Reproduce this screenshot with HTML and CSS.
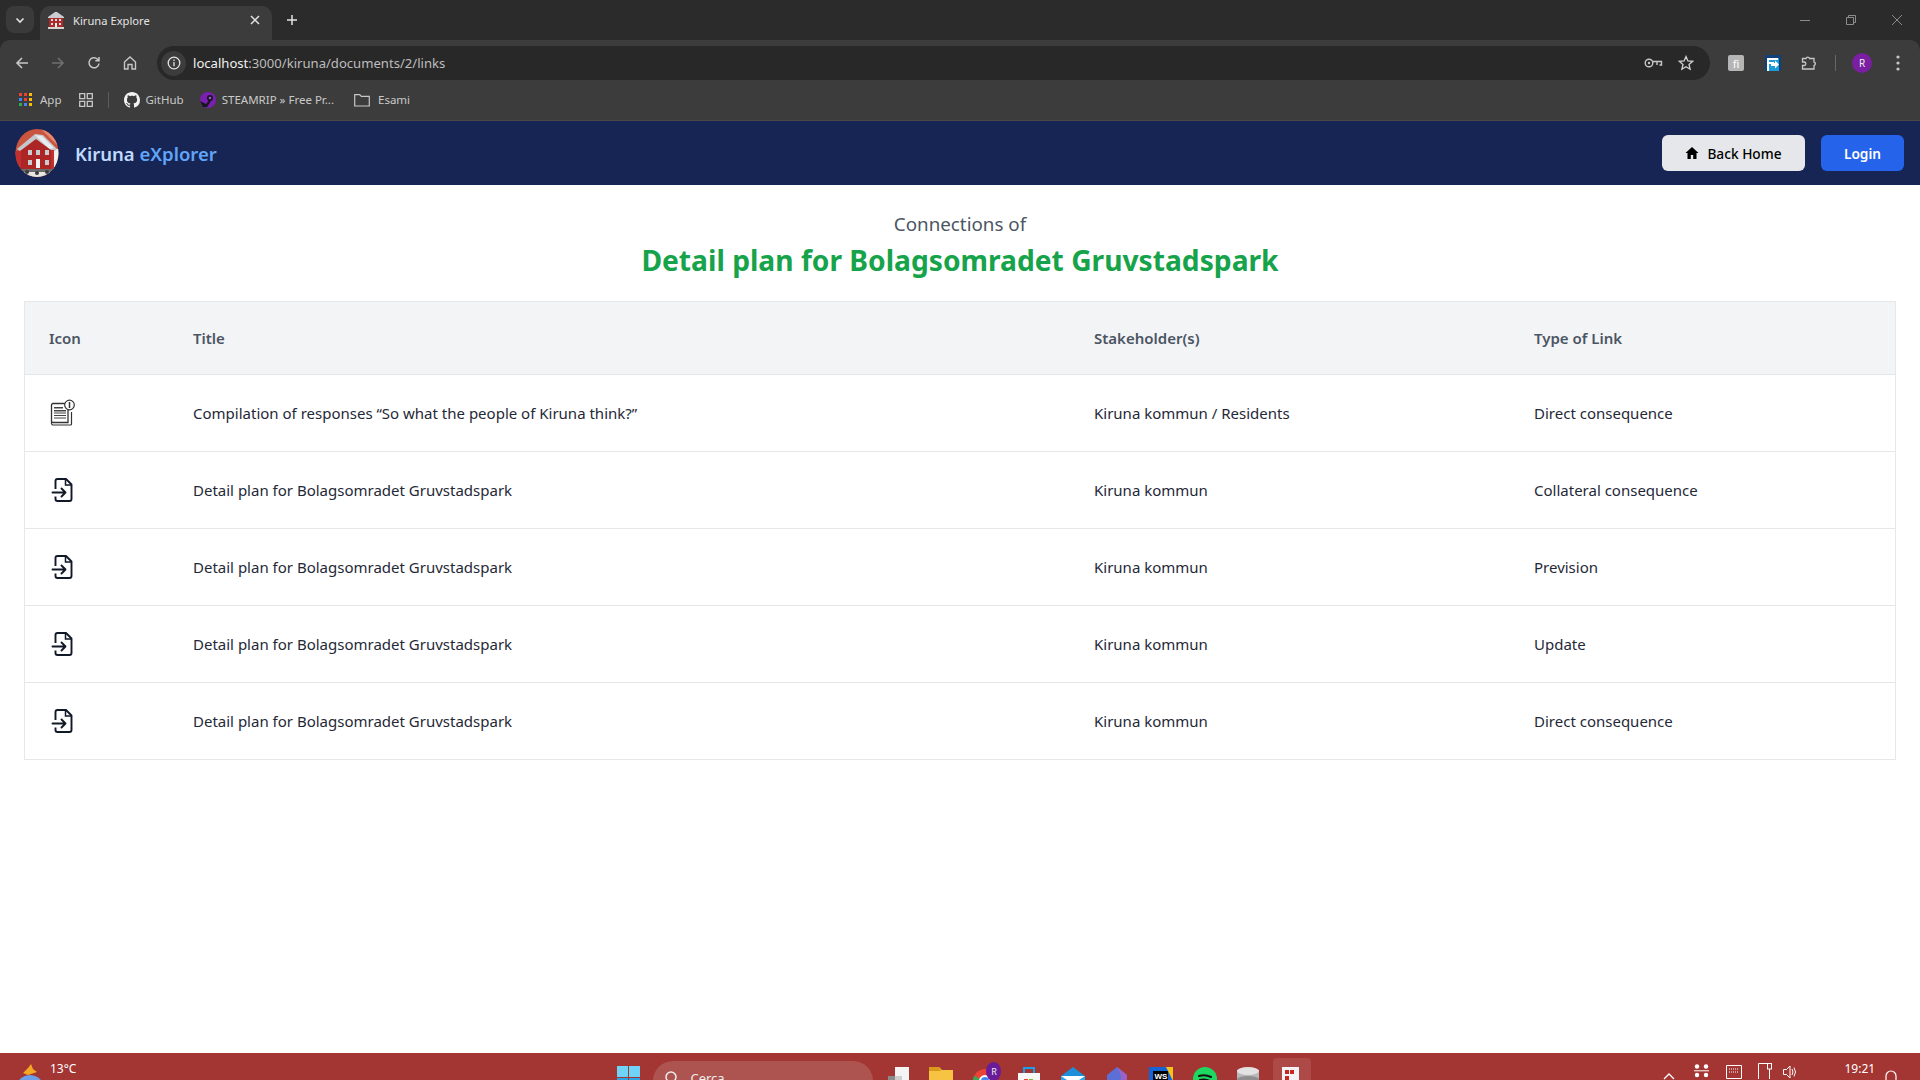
FILE: index.html
```html
<!DOCTYPE html>
<html lang="en">
<head>
<meta charset="utf-8">
<title>Kiruna Explore</title>
<link rel="stylesheet" href="styles.css">
</head>
<body>
<svg class="defs" width="0" height="0" aria-hidden="true">
  <symbol id="house" viewBox="0 0 44 48">
    <clipPath id="hc"><ellipse cx="22" cy="24" rx="21.500" ry="24"/></clipPath>
    <g clip-path="url(#hc)">
      <rect width="44" height="48" fill="#c9553f"/>
      <path d="M26 0h18v18z" fill="#e8876f"/>
      <path d="M0 0h14L0 14z" fill="#a9432f"/>
      <path d="M36 20h8v20h-8z" fill="#f5f0ec"/>
      <path d="M2 20 20 5l8 1 14 14-2 2H5z" fill="#c4c8cc"/>
      <path d="M20 6l7 1 12 12-5 1z" fill="#e9ecee"/>
      <path d="M5 22 21 10l15 11v19H5z" fill="#ad2626"/>
      <path d="M0 22h6v16H0zM36 21h3v19h-3z" fill="#c22f2f"/>
      <g fill="#c9ccd0">
        <rect x="13" y="21" width="4" height="5"/><rect x="21" y="21" width="4" height="5"/><rect x="30" y="21" width="4" height="5"/>
        <rect x="13" y="31" width="4" height="5"/><rect x="30" y="31" width="4" height="5"/>
      </g>
      <rect x="21" y="30" width="4" height="9" fill="#f2f2f2"/>
      <path d="M3 40h38v3H3z" fill="#6b6b6b"/>
      <path d="M0 43h44v5H0z" fill="#e9e6e2"/>
      <g fill="#3a3a3a"><circle cx="12" cy="43" r="2"/><circle cx="22" cy="44" r="2"/><circle cx="32" cy="43" r="2"/></g>
    </g>
  </symbol>
  <symbol id="fav" viewBox="0 0 16 17">
    <path d="M0 5 7 0h2l7 5v1H0z" fill="#c9ccd0"/>
    <path d="M1 6h14v9H1z" fill="#ad2a2a"/>
    <path d="M3 7h2v2H3zM7 7h2v2H7zM11 7h2v2h-2zM3 11h2v2H3zM11 11h2v2h-2z" fill="#d9dbdd"/>
    <path d="M7 11h2v4H7z" fill="#f2f2f2"/>
    <path d="M0 15h16v2H0z" fill="#d8d4d0"/>
  </symbol>
  <symbol id="file-in" viewBox="0 0 26 26">
    <path d="M6.500 12V4a2 2 0 0 1 2-2h8.500l5.500 5.500V22a2 2 0 0 1-2 2h-12a2 2 0 0 1-2-2v-2.500" fill="none" stroke="#111827" stroke-width="1.900" stroke-linejoin="round"/>
    <path d="M16.500 2.500v5.500h5.500" fill="none" stroke="#111827" stroke-width="1.500"/>
    <path d="M3.500 15.500H16.500M12.500 11.500l4 4-4 4" fill="none" stroke="#111827" stroke-width="1.900" stroke-linecap="round" stroke-linejoin="round"/>
  </symbol>
</svg>

<div class="browser">
  <div class="tabstrip">
    <span class="tab-menu">
      <svg width="12" height="12" viewBox="0 0 12 12"><path d="M2.500 4.500 6 8l3.500-3.500" fill="none" stroke="#e3e3e3" stroke-width="1.600"/></svg>
    </span>
    <div class="tab">
      <svg class="tab-fav" width="16" height="17"><use href="#fav"/></svg>
      <span class="tab-title">Kiruna Explore</span>
      <svg class="tab-close" width="10" height="10" viewBox="0 0 10 10"><path d="M1 1l8 8M9 1 1 9" stroke="#e3e3e3" stroke-width="1.500"/></svg>
    </div>
    <svg class="tab-new" width="12" height="12" viewBox="0 0 12 12"><path d="M6 1v10M1 6h10" stroke="#e3e3e3" stroke-width="1.500"/></svg>
    <div class="win-controls">
      <svg width="12" height="12" viewBox="0 0 12 12"><path d="M1 6.500h10" stroke="#8c8c8c"/></svg>
      <svg width="12" height="12" viewBox="0 0 12 12"><path d="M1.500 3.500h7v7h-7zM3.500 3V1.500h7v7H9" fill="none" stroke="#8c8c8c"/></svg>
      <svg width="12" height="12" viewBox="0 0 12 12"><path d="M1 1l10 10M11 1 1 11" stroke="#8c8c8c"/></svg>
    </div>
  </div>

  <div class="toolbar">
    <svg class="nav nav-back" width="16" height="16" viewBox="0 0 16 16"><path d="M14 8H3M8 3 3 8l5 5" fill="none" stroke="#c7c7c7" stroke-width="1.600"/></svg>
    <svg class="nav nav-fwd" width="16" height="16" viewBox="0 0 16 16"><path d="M2 8h11M8 3l5 5-5 5" fill="none" stroke="#6f6f6f" stroke-width="1.600"/></svg>
    <svg class="nav nav-reload" width="16" height="16" viewBox="0 0 16 16"><path d="M13 8.500A5 5 0 1 1 11.500 4.200L13 5.500M13 2v3.700H9.300" fill="none" stroke="#c7c7c7" stroke-width="1.500"/></svg>
    <svg class="nav nav-home" width="16" height="16" viewBox="0 0 16 16"><path d="M2.500 7 8 2l5.500 5v7h-3.500V9.500H6V14H2.500z" fill="none" stroke="#c7c7c7" stroke-width="1.400"/></svg>
    <div class="omnibox">
      <span class="site-info">
        <svg width="14" height="14" viewBox="0 0 14 14"><circle cx="7" cy="7" r="5.800" fill="none" stroke="#e3e3e3" stroke-width="1.300"/><path d="M7 6v4.200M7 3.600v1.300" stroke="#e3e3e3" stroke-width="1.300"/></svg>
      </span>
      <span class="url"><b>localhost</b>:3000/kiruna/documents/2/links</span>
      <svg class="omni-key" width="19" height="12" viewBox="0 0 19 12"><circle cx="5" cy="6" r="3.800" fill="none" stroke="#c7c7c7" stroke-width="1.400"/><circle cx="5" cy="6" r="1.200" fill="#c7c7c7"/><path d="M8.800 4.500H17.500V8H15.500M13 4.500V8" fill="none" stroke="#c7c7c7" stroke-width="1.400"/></svg>
      <svg class="omni-star" width="16" height="16" viewBox="0 0 16 16"><path d="M8 1.600 9.900 6l4.700.4-3.600 3.100 1.100 4.700L8 11.700l-4.100 2.500L5 9.500 1.400 6.400 6.100 6z" fill="none" stroke="#d4d4d4" stroke-width="1.300"/></svg>
    </div>
    <span class="ext ext-k">fi</span>
    <svg class="ext-f" width="16" height="16" viewBox="0 0 16 16"><rect width="16" height="16" rx="1" fill="#10407a"/><rect x="2" y="3" width="12" height="13" fill="#1b9bd8"/><path d="M2 3h11v2H4v2h5v2H4v7H2z" fill="#fff"/><path d="M6 8h4V5.500l4 4-4 4V11H6z" fill="#fff"/></svg>
    <svg class="ext-p" width="16" height="16" viewBox="0 0 16 16"><path d="M1.500 3.500H5a1.800 1.800 0 0 1 3.500 0H13v3.500a1.800 1.800 0 0 1 0 3.500V14H1.500v-3.500h2a1.800 1.800 0 0 0 0-3.500h-2z" fill="none" stroke="#c7c7c7" stroke-width="1.300"/></svg>
    <span class="tool-sep"></span>
    <span class="avatar">R</span>
    <svg class="menu-dots" width="4" height="16" viewBox="0 0 4 16"><circle cx="2" cy="2" r="1.600" fill="#c7c7c7"/><circle cx="2" cy="8" r="1.600" fill="#c7c7c7"/><circle cx="2" cy="14" r="1.600" fill="#c7c7c7"/></svg>
  </div>

  <div class="bookmarks">
    <svg class="bm-apps" width="13" height="13" viewBox="0 0 13 13">
      <rect width="3" height="3" fill="#ea4335"/><rect x="5" width="3" height="3" fill="#ea4335"/><rect x="10" width="3" height="3" fill="#fbbc05"/>
      <rect y="5" width="3" height="3" fill="#4285f4"/><rect x="5" y="5" width="3" height="3" fill="#ea4335"/><rect x="10" y="5" width="3" height="3" fill="#fbbc05"/>
      <rect y="10" width="3" height="3" fill="#34a853"/><rect x="5" y="10" width="3" height="3" fill="#4285f4"/><rect x="10" y="10" width="3" height="3" fill="#fbbc05"/>
    </svg>
    <span class="bm-label bm-app">App</span>
    <svg class="bm-grid" width="14" height="14" viewBox="0 0 14 14"><path d="M.7.700h5v5h-5zM8.300.700h5v5h-5zM.7 8.300h5v5h-5zM8.300 8.300h5v5h-5z" fill="none" stroke="#c7c7c7" stroke-width="1.300"/></svg>
    <span class="bm-sep"></span>
    <svg class="bm-gh" width="16" height="16" viewBox="0 0 16 16"><path fill="#f2f2f2" d="M8 0C3.580 0 0 3.580 0 8c0 3.540 2.290 6.530 5.470 7.590.4.070.55-.17.55-.38 0-.19-.01-.82-.01-1.490-2.010.37-2.530-.49-2.690-.94-.09-.23-.48-.94-.82-1.130-.28-.15-.68-.52-.01-.53.63-.01 1.080.58 1.230.82.720 1.210 1.870.87 2.330.66.070-.52.280-.87.510-1.070-1.780-.2-3.640-.89-3.640-3.950 0-.87.310-1.590.820-2.150-.08-.2-.36-1.020.08-2.120 0 0 .67-.21 2.200.82.640-.18 1.320-.27 2-.27s1.360.09 2 .27c1.530-1.040 2.200-.82 2.200-.82.440 1.100.16 1.920.08 2.120.51.560.82 1.270.82 2.150 0 3.070-1.870 3.750-3.650 3.950.29.250.54.730.54 1.480 0 1.070-.01 1.930-.01 2.200 0 .21.150.46.550.38A8.010 8.010 0 0 0 16 8c0-4.420-3.580-8-8-8z"/></svg>
    <span class="bm-label bm-ghl">GitHub</span>
    <svg class="bm-steam" width="16" height="16" viewBox="0 0 16 16"><circle cx="8" cy="8" r="8" fill="#7a1fb0"/><circle cx="10" cy="6" r="3" fill="#16161e"/><circle cx="10" cy="6" r="1.300" fill="#a05ad0"/><path d="M0 9l6 3 4-5 1 2-4 6H3z" fill="#16161e"/></svg>
    <span class="bm-label bm-st">STEAMRIP » Free Pr...</span>
    <svg class="bm-folder" width="16" height="14" viewBox="0 0 16 14"><path d="M.7 1.700h5l1.600 1.700h8v9.600H.7z" fill="none" stroke="#c7c7c7" stroke-width="1.200"/></svg>
    <span class="bm-label bm-es">Esami</span>
  </div>
</div>

<header class="app-header">
  <svg class="logo" width="44" height="48"><use href="#house"/></svg>
  <div class="brand">Kiruna <span class="brand-accent">eXplorer</span></div>
  <button class="btn btn-home">
    <svg width="14" height="14" viewBox="0 0 14 14"><path d="M7 1 .5 7H2.500v6h3.300V9h2.400v4h3.300V7h2z" fill="#000"/></svg>
    Back Home
  </button>
  <button class="btn btn-login">Login</button>
</header>

<main class="content">
  <div class="heading">
    <p class="sub">Connections of</p>
    <h1 class="doc-title">Detail plan for Bolagsomradet Gruvstadspark</h1>
  </div>
  <table class="links">
    <colgroup><col class="c1"><col class="c2"><col class="c3"><col class="c4"></colgroup>
    <thead>
      <tr><th>Icon</th><th>Title</th><th>Stakeholder(s)</th><th>Type of Link</th></tr>
    </thead>
    <tbody>
      <tr>
        <td>
          <svg class="row-icon" width="26" height="28" viewBox="0 0 26 28">
            <path d="M3 4.500h15v19H3a1.500 1.500 0 0 1-1.500-1.500V6A1.500 1.500 0 0 1 3 4.500z" fill="#fff" stroke="#333" stroke-width="1.300"/>
            <path d="M1.500 22v1.500A2 2 0 0 0 3.500 26h17a1 1 0 0 0 1-1V13" fill="none" stroke="#333" stroke-width="1.200"/>
            <path d="M4 8h9v1.500H4zM4 11h12v1.400H4zM4 13.500h12v1.100H4zM4 16h12v1.100H4zM4 18.500h12v1.100H4z" fill="#444"/>
            <circle cx="19.500" cy="6" r="4.800" fill="#fff" stroke="#333" stroke-width="1.200"/>
            <path d="M19.500 3v6" stroke="#333" stroke-width="1.500"/>
          </svg>
        </td>
        <td>Compilation of responses “So what the people of Kiruna think?”</td>
        <td>Kiruna kommun / Residents</td>
        <td>Direct consequence</td>
      </tr>
      <tr>
        <td><svg class="file-icon" width="26" height="26"><use href="#file-in"/></svg></td>
        <td>Detail plan for Bolagsomradet Gruvstadspark</td>
        <td>Kiruna kommun</td>
        <td>Collateral consequence</td>
      </tr>
      <tr>
        <td><svg class="file-icon" width="26" height="26"><use href="#file-in"/></svg></td>
        <td>Detail plan for Bolagsomradet Gruvstadspark</td>
        <td>Kiruna kommun</td>
        <td>Prevision</td>
      </tr>
      <tr>
        <td><svg class="file-icon" width="26" height="26"><use href="#file-in"/></svg></td>
        <td>Detail plan for Bolagsomradet Gruvstadspark</td>
        <td>Kiruna kommun</td>
        <td>Update</td>
      </tr>
      <tr>
        <td><svg class="file-icon" width="26" height="26"><use href="#file-in"/></svg></td>
        <td>Detail plan for Bolagsomradet Gruvstadspark</td>
        <td>Kiruna kommun</td>
        <td>Direct consequence</td>
      </tr>
    </tbody>
  </table>
</main>

<footer class="taskbar">
  <svg class="tb-weather" width="28" height="30" viewBox="0 0 28 30"><path d="M12 6l3-4 2 5 4 3-9 3-5-2z" fill="#f5a623"/><ellipse cx="14" cy="22" rx="12" ry="9" fill="#6f9ee8"/></svg>
  <span class="tb-temp">13°C</span>
  <svg class="tb-win" width="23" height="23" viewBox="0 0 23 23"><rect width="11" height="11" fill="#6fd3f7"/><rect x="12" width="11" height="11" fill="#6fd3f7"/><rect y="12" width="11" height="11" fill="#2aa5e8"/><rect x="12" y="12" width="11" height="11" fill="#2aa5e8"/></svg>
  <div class="tb-search">
    <svg width="16" height="16" viewBox="0 0 16 16"><circle cx="7" cy="7" r="5" fill="none" stroke="#eee" stroke-width="1.500"/></svg>
    <span>Cerca</span>
  </div>
  <svg class="tb-i i1" width="24" height="24" viewBox="0 0 24 24"><rect x="7" width="14" height="24" fill="#f4f4f4"/><rect y="9" width="14" height="15" fill="#8a8a8a"/><rect x="7" y="9" width="7" height="15" fill="#cfcfcf"/></svg>
  <svg class="tb-i i2" width="26" height="24" viewBox="0 0 26 24"><path d="M1 0h10l3 3h11v21H1z" fill="#f6c343"/><path d="M1 0h10l2 4H1z" fill="#d99a1c"/></svg>
  <span class="tb-chrome">
    <svg width="26" height="26" viewBox="0 0 26 26"><circle cx="12" cy="14" r="12" fill="#ea4335"/><path d="M12 14 24 14A12 12 0 0 1 12 26z" fill="#fbbc05"/><path d="M12 14V26A12 12 0 0 1 1 9z" fill="#34a853"/><circle cx="12" cy="14" r="5" fill="#4285f4" stroke="#fff" stroke-width="2"/></svg>
    <span class="tb-badge">R</span>
  </span>
  <svg class="tb-i i4" width="24" height="26" viewBox="0 0 24 26"><path d="M1 6h22v20H1z" fill="#f7f7f7"/><path d="M7 6V1h10v5" fill="none" stroke="#1aa0e8" stroke-width="2"/><rect x="7" y="12" width="4" height="4" fill="#e8412c"/><rect x="12" y="12" width="4" height="4" fill="#7db72f"/></svg>
  <svg class="tb-i i5" width="24" height="24" viewBox="0 0 24 24"><path d="M12 0 24 9H0z" fill="#1c8fd8"/><rect y="9" width="24" height="15" fill="#2ba7ea"/><path d="M0 9l12 8 12-8z" fill="#fff"/></svg>
  <svg class="tb-i i6" width="20" height="24" viewBox="0 0 20 24"><path d="M10 0 20 8v16H0V8z" fill="#5b6fd6"/><path d="M10 0 20 8v16h-6V9z" fill="#9a63c9"/></svg>
  <svg class="tb-i i7" width="24" height="24" viewBox="0 0 24 24"><rect width="24" height="24" fill="#1565d8"/><path d="M17 0h7v14z" fill="#f4c21b"/><rect x="4" y="4" width="15" height="15" fill="#000"/><text x="5.500" y="12" font-size="8" font-weight="700" fill="#fff" font-family="Liberation Sans">WS</text></svg>
  <svg class="tb-i i8" width="24" height="24" viewBox="0 0 24 24"><circle cx="12" cy="12" r="12" fill="#1ed760"/><path d="M6 9q6-2 12 1M7 13q5-1.500 10 1M8 17q4-1 8 1" fill="none" stroke="#111" stroke-width="2" stroke-linecap="round"/></svg>
  <svg class="tb-i i9" width="22" height="24" viewBox="0 0 22 24"><rect y="3" width="22" height="21" fill="#b8b8b8"/><ellipse cx="11" cy="4" rx="11" ry="4" fill="#e2e2e2"/><ellipse cx="11" cy="12" rx="11" ry="3" fill="#8f8f8f"/></svg>
  <span class="tb-active">
    <svg width="24" height="24" viewBox="0 0 24 24"><rect x="2" width="17" height="24" fill="#f3f3f3"/><rect x="5" y="3" width="4" height="4" fill="#c8281f"/><rect x="10" y="3" width="4" height="4" fill="#c8281f"/><rect x="5" y="9" width="4" height="4" fill="#c8281f"/><rect x="5" y="15" width="4" height="4" fill="#c8281f"/><rect x="16" y="16" width="8" height="8" fill="#4a86c8"/></svg>
  </span>
  <svg class="tray t1" width="12" height="8" viewBox="0 0 12 8"><path d="M1 7l5-5 5 5" fill="none" stroke="#fff" stroke-width="1.300"/></svg>
  <svg class="tray t2" width="15" height="14" viewBox="0 0 15 14"><g fill="#fff"><circle cx="3" cy="2.500" r="2.200"/><circle cx="12" cy="2.500" r="2.200"/><circle cx="3" cy="11" r="2.200"/><circle cx="12" cy="11" r="2.200"/></g><path d="M0 6.800h15" stroke="#fff"/></svg>
  <svg class="tray t3" width="16" height="14" viewBox="0 0 16 14"><path d="M.5.500h15v13H.5z" fill="none" stroke="#fff"/><path d="M3 4h10M3 7h10" stroke="#fff" stroke-dasharray="1 1"/></svg>
  <svg class="tray t4" width="16" height="16" viewBox="0 0 16 16"><path d="M10 .5H.5V16M11.500 6V16" fill="none" stroke="#fff"/><rect x="9.500" y=".5" width="4" height="5.500" fill="none" stroke="#fff"/></svg>
  <svg class="tray t5" width="14" height="14" viewBox="0 0 14 14"><path d="M.5 4.500h3L7 1v12L3.500 9.500h-3z" fill="none" stroke="#fff"/><path d="M9 4q2 3 0 6M11 2.500q3 4.500 0 9" fill="none" stroke="#fff"/></svg>
  <span class="tb-clock">19:21</span>
  <svg class="tray t6" width="12" height="13" viewBox="0 0 12 13"><path d="M1 13V6a5 5 0 0 1 10 0v7" fill="none" stroke="#fff" stroke-width="1.200"/></svg>
</footer>
</body>
</html>
```

FILE: styles.css
```css
* { box-sizing: border-box; }
html, body { margin: 0; height: 100%; }
body {
  display: flex;
  flex-direction: column;
  height: 1080px;
  overflow: hidden;
  background: #fff;
  font-family: "Noto Sans", "Open Sans", sans-serif;
}
.defs { display: block; height: 0; }

/* browser chrome */
.browser { flex: none; height: 121px; background: #2b2b2b; color: #e3e3e3; }
.tabstrip { display: flex; align-items: flex-end; height: 40px; padding-left: 6px; }
.tab-menu {
  width: 28px; height: 27px; margin-bottom: 7px;
  display: flex; align-items: center; justify-content: center;
  background: #3a3a3a; border-radius: 8px;
}
.tab {
  width: 232px; height: 34px; margin-left: 6px;
  display: flex; align-items: center;
  padding: 0 12px 6px 8px;
  background: #3c3c3c; border-radius: 10px 10px 0 0;
}
.tab-title { margin-left: 9px; font-size: 11.200px; flex: 1; color: #e3e3e3; }
.tab-new { margin: 0 0 14px 14px; }
.win-controls { margin: 0 17px 14px auto; display: flex; gap: 34px; }

.toolbar {
  display: flex; align-items: center;
  height: 42px; padding: 4px 20px 0 14px;
  background: #3c3c3c; border-radius: 10px 10px 0 0;
}
.nav { flex: none; }
.nav-fwd { margin-left: 20px; }
.nav-reload { margin-left: 20px; }
.nav-home { margin-left: 20px; }
.omnibox {
  flex: none; width: 1553px; height: 34px; margin-left: 19px;
  display: flex; align-items: center;
  padding: 0 16px 0 4px;
  background: #282828; border-radius: 17px;
}
.site-info {
  width: 25px; height: 25px; border-radius: 50%; background: #3c3c3c;
  display: flex; align-items: center; justify-content: center;
}
.url { margin-left: 7px; font-size: 13.100px; color: #bdbdbd; flex: 1; }
.url b { font-weight: 400; color: #f1f1f1; }
.omni-star { margin-left: 15px; }
.ext {
  flex: none; width: 16px; height: 16px; margin-left: 18px;
  display: flex; align-items: center; justify-content: center;
  background: #b5b5b5; border-radius: 2px; color: #fff; font-size: 11px;
}
.ext-f { flex: none; margin-left: 21px; }
.ext-p { flex: none; margin-left: 20px; }
.tool-sep { flex: none; width: 1px; height: 16px; margin-left: 18px; background: #666; }
.avatar {
  flex: none; width: 20px; height: 20px; margin-left: 16px;
  display: flex; align-items: center; justify-content: center;
  border-radius: 50%; background: #7b1fa2; color: #eee; font-size: 10px;
}
.menu-dots { flex: none; margin-left: 24px; }

.bookmarks {
  display: flex; align-items: center;
  height: 39px; padding: 0 0 3px 19px;
  background: #3c3c3c; border-bottom: 1px solid #4a4a4a;
}
.bm-label { font-size: 11.500px; color: #c9c9c9; line-height: 1; }
.bm-app { margin-left: 8px; }
.bm-grid { margin-left: 17px; }
.bm-sep { width: 1px; height: 16px; margin-left: 15px; background: #5c5c5c; }
.bm-gh { margin-left: 15px; }
.bm-ghl { margin-left: 6px; }
.bm-steam { margin-left: 16px; }
.bm-st { margin-left: 6px; }
.bm-folder { margin-left: 20px; }
.bm-es { margin-left: 8px; }

/* app header */
.app-header {
  flex: none; height: 64px;
  display: flex; align-items: center;
  padding: 0 16px 0 15px;
  background: #172554;
}
.logo { flex: none; }
.brand { margin-left: 16px; margin-right: auto; font-size: 18.500px; font-weight: 600; color: #bfdbfe; }
.brand-accent { color: #60a5fa; }
.btn {
  height: 36px; border: 0; border-radius: 6px;
  display: flex; align-items: center; justify-content: center; gap: 8px;
  font-family: inherit; font-size: 13.700px; font-weight: 500;
}
.btn-home { width: 143px; background: #e5e7eb; color: #000; }
.btn-login { width: 83px; margin-left: 16px; background: #2563eb; color: #fff; font-weight: 600; }

/* content */
.content { flex: 1; min-height: 0; padding: 0 24px; }
.heading { height: 116px; padding-top: 25px; text-align: center; }
.sub { margin: 0; font-size: 18.800px; line-height: 28px; color: #4b5563; }
.doc-title { margin: 2px 0 0; font-size: 28.200px; line-height: 40px; font-weight: 700; color: #16a34a; }

.links {
  width: 100%; border-collapse: collapse; table-layout: fixed;
  border: 1px solid #e5e7eb;
  font-size: 15px; color: #1f2937;
}
.c1 { width: 144px; }
.c2 { width: 901px; }
.c3 { width: 440px; }
.links th {
  height: 73px; padding: 0 0 0 24.500px;
  text-align: left; font-weight: 600; color: #4b5563;
  background: #f3f4f6;
}
.links td { height: 77px; padding: 0 0 0 24.500px; border-top: 1px solid #e5e7eb; }
.links td:first-child, .links th:first-child { padding-left: 24px; }
.row-icon { display: block; margin-left: 1px; }
.file-icon { display: block; }

/* taskbar */
.taskbar {
  flex: none; height: 27px; overflow: hidden;
  display: flex; align-items: flex-start;
  padding: 0 0 0 16px;
  background: #a33533; color: #fff;
}
.tb-weather { flex: none; margin-top: 9px; }
.tb-temp { flex: none; margin: 8px 0 0 6px; font-size: 12px; line-height: 16px; }
.tb-win { flex: none; margin: 13px 0 0 541px; }
.tb-search {
  flex: none; width: 220px; height: 40px; margin: 8px 0 0 13px;
  display: flex; align-items: flex-start; gap: 10px;
  padding: 9px 0 0 11px;
  background: #ae5450; border-radius: 20px;
  font-size: 13px; color: #eee; line-height: 16px;
}
.tb-i { flex: none; margin-top: 14px; }
.i1 { margin-left: 15px; }
.i2 { margin-left: 16px; }
.tb-chrome { flex: none; position: relative; margin: 14px 0 0 19px; width: 26px; height: 26px; }
.tb-badge {
  position: absolute; top: -5px; left: 13px;
  width: 15px; height: 19px; border-radius: 50%;
  display: flex; align-items: center; justify-content: center;
  background: #6a1b9a; color: #eee; font-size: 9px;
}
.i4 { margin-left: 18px; }
.i5 { margin-left: 20px; }
.i6 { margin-left: 22px; }
.i7 { margin-left: 22px; }
.i8 { margin-left: 20px; }
.i9 { margin-left: 20px; }
.tb-active {
  flex: none; width: 38px; height: 40px; margin: 5px 0 0 14px;
  display: flex; justify-content: center; padding-top: 9px;
  background: #ad4a47; border-radius: 4px 4px 0 0;
}
.tray { flex: none; }
.t1 { margin: 19px 0 0 352px; }
.t2 { margin: 11px 0 0 19px; }
.t3 { margin: 12px 0 0 17px; }
.t4 { margin: 10px 0 0 16px; }
.t5 { margin: 12px 0 0 9px; }
.tb-clock { flex: none; margin: 8px 0 0 47px; font-size: 12px; line-height: 16px; }
.t6 { margin: 17px 0 0 10px; }
```
